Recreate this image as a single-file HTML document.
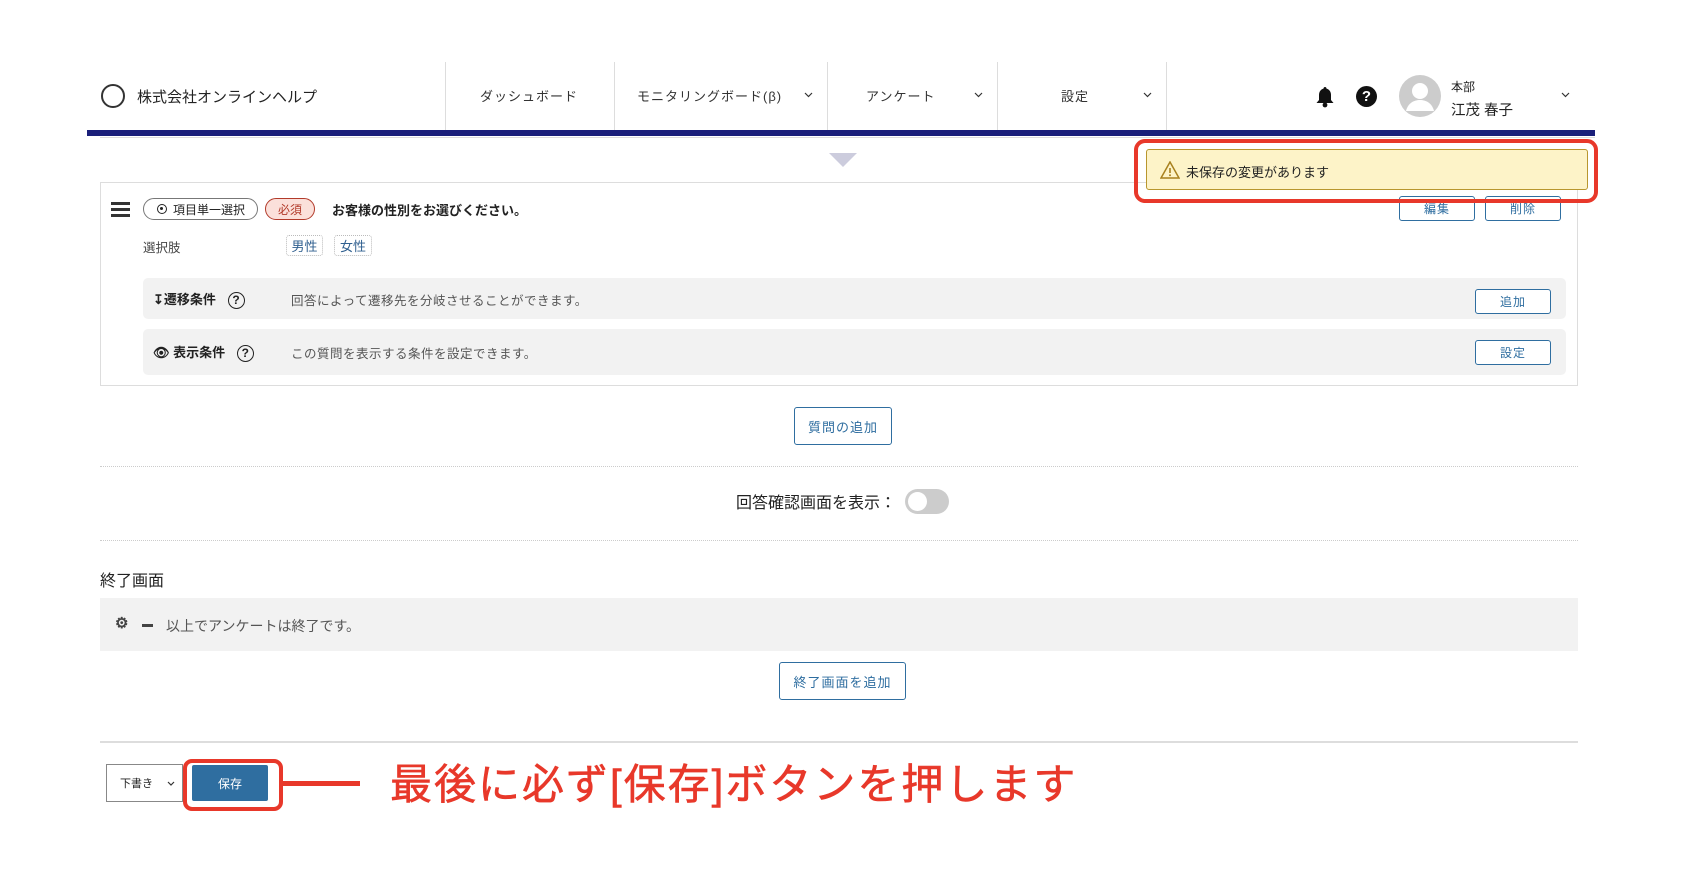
<!DOCTYPE html>
<html><head><meta charset="utf-8"><style>
*{margin:0;padding:0;box-sizing:border-box}
body{width:1682px;height:886px;background:#fff;position:relative;overflow:hidden;font-family:"Liberation Sans","Noto Sans CJK JP",sans-serif;color:#222}
.a{position:absolute}
.sep{position:absolute;top:62px;width:1px;height:68px;background:#ddd}
.nav{position:absolute;top:86px;font-size:13px;color:#333;letter-spacing:1px}
.chev{position:absolute;top:92px}
.btn{position:absolute;border:1px solid #2f6ea0;border-radius:3px;color:#2f6ea0;font-size:12px;display:flex;align-items:center;justify-content:center;background:#fff;letter-spacing:1px}
.row{position:absolute;left:143px;width:1423px;background:#f2f2f2;border-radius:5px}
.lbl{position:absolute;font-size:13px;font-weight:bold;color:#222}
.desc{position:absolute;font-size:12.5px;color:#555;letter-spacing:.5px}
.q{display:inline-flex;width:17px;height:17px;border:1.6px solid #222;border-radius:50%;font-size:12px;font-weight:bold;align-items:center;justify-content:center}
.chip{position:absolute;top:235px;height:21px;border:1px dotted #bbb;border-radius:3px;font-size:13px;color:#2f5f8f;display:flex;align-items:center;justify-content:center}
</style></head><body>
<!-- header -->
<div class="a" style="left:101px;top:84px;width:24px;height:24px;border:2px solid #333;border-radius:50%"></div>
<div class="a" style="left:137px;top:86px;font-size:15px;color:#222">株式会社オンラインヘルプ</div>
<div class="sep" style="left:445px"></div><div class="sep" style="left:614px"></div><div class="sep" style="left:827px"></div><div class="sep" style="left:997px"></div><div class="sep" style="left:1166px"></div>
<div class="nav" style="left:480px">ダッシュボード</div>
<div class="nav" style="left:637px">モニタリングボード(β)</div><svg class="chev" style="left:804px" width="9" height="6"><path d="M1 1l3.5 3.5L8 1" fill="none" stroke="#333" stroke-width="1.2"/></svg>
<div class="nav" style="left:866px">アンケート</div><svg class="chev" style="left:974px" width="9" height="6"><path d="M1 1l3.5 3.5L8 1" fill="none" stroke="#333" stroke-width="1.2"/></svg>
<div class="nav" style="left:1061px">設定</div><svg class="chev" style="left:1143px" width="9" height="6"><path d="M1 1l3.5 3.5L8 1" fill="none" stroke="#333" stroke-width="1.2"/></svg>
<svg class="a" style="left:1315px;top:86px" width="20" height="22" viewBox="0 0 20 22"><path d="M10 1c-1 0-1.5.8-1.5 1.6C5.5 3.4 4 6 4 9v5l-2.5 3h17L16 14V9c0-3-1.5-5.6-4.5-6.4C11.5 1.8 11 1 10 1z" fill="#111"/><circle cx="10" cy="19" r="2.4" fill="#111"/></svg>
<div class="a" style="left:1356px;top:86px;width:21px;height:21px;border-radius:50%;background:#111;color:#fff;font-weight:bold;font-size:15px;display:flex;align-items:center;justify-content:center">?</div>
<svg class="a" style="left:1399px;top:75px" width="42" height="42" viewBox="0 0 42 42"><circle cx="21" cy="21" r="21" fill="#ccc"/><circle cx="21" cy="16" r="8" fill="#fff"/><path d="M7 36c2-8 8-11 14-11s12 3 14 11z" fill="#fff"/></svg>
<div class="a" style="left:1451px;top:78px;font-size:12px">本部</div>
<div class="a" style="left:1451px;top:99px;font-size:14.5px">江茂 春子</div>
<svg class="chev" style="left:1561px" width="9" height="6"><path d="M1 1l3.5 3.5L8 1" fill="none" stroke="#333" stroke-width="1.2"/></svg>
<div class="a" style="left:87px;top:130px;width:1508px;height:6px;background:#1a1f7a"></div>
<div class="a" style="left:100px;top:137px;width:1495px;height:1px;background:#ddd"></div>
<svg class="a" style="left:829px;top:153px" width="28" height="15"><path d="M0 0h28L14 14z" fill="#ccd"/></svg>
<!-- card -->
<div class="a" style="left:100px;top:182px;width:1478px;height:204px;border:1px solid #ddd"></div>
<div class="a" style="left:111px;top:202px;width:19px;height:3px;background:#333;box-shadow:0 6px 0 #333,0 12px 0 #333"></div>
<div class="a" style="left:143px;top:198px;width:115px;height:22px;border:1px solid #777;border-radius:11px;font-size:12px;display:flex;align-items:center;padding-left:13px"><span style="display:inline-block;width:10px;height:10px;border:1.5px solid #222;border-radius:50%;margin-right:6px;position:relative"><span style="position:absolute;left:2px;top:2px;width:3px;height:3px;background:#222;border-radius:50%"></span></span>項目単一選択</div>
<div class="a" style="left:265px;top:198px;width:50px;height:22px;border:1px solid #b23a2a;background:#fbe0da;border-radius:11px;font-size:12px;color:#b23a2a;display:flex;align-items:center;justify-content:center">必須</div>
<div class="a" style="left:332px;top:200px;font-size:13px;font-weight:bold">お客様の性別をお選びください。</div>
<div class="btn" style="left:1399px;top:196px;width:76px;height:25px">編集</div>
<div class="btn" style="left:1485px;top:196px;width:76px;height:25px">削除</div>
<div class="a" style="left:143px;top:237px;font-size:12.5px;color:#444">選択肢</div>
<div class="chip" style="left:286px;width:37px">男性</div>
<div class="chip" style="left:334px;width:38px">女性</div>
<div class="row" style="top:278px;height:41px"></div>
<div class="lbl" style="left:153px;top:289px">↧遷移条件 <span class="q" style="margin-left:8px">?</span></div>
<div class="desc" style="left:291px;top:290px">回答によって遷移先を分岐させることができます。</div>
<div class="btn" style="left:1475px;top:289px;width:76px;height:25px">追加</div>
<div class="row" style="top:329px;height:46px"></div>
<div class="lbl" style="left:153px;top:342px">👁 表示条件 <span class="q" style="margin-left:8px">?</span></div>
<div class="desc" style="left:291px;top:343px">この質問を表示する条件を設定できます。</div>
<div class="btn" style="left:1475px;top:340px;width:76px;height:25px">設定</div>
<!-- alert -->
<div class="a" style="left:1134px;top:139px;width:464px;height:64px;border:4px solid #e8382a;border-radius:11px"></div>
<div class="a" style="left:1146px;top:149px;width:442px;height:41px;background:#fdf3c8;border:1px solid #b8962e;border-radius:3px"></div>
<svg class="a" style="left:1160px;top:161px" width="20" height="18" viewBox="0 0 20 18"><path d="M10 1L19 17H1z" fill="none" stroke="#a8801e" stroke-width="1.5"/><path d="M10 7v5" stroke="#a8801e" stroke-width="1.6"/><circle cx="10" cy="14.3" r="1" fill="#a8801e"/></svg>
<div class="a" style="left:1186px;top:162px;font-size:13px;color:#222">未保存の変更があります</div>
<!-- middle -->
<div class="btn" style="left:794px;top:407px;width:98px;height:38px;font-size:13px">質問の追加</div>
<div class="a" style="left:100px;top:466px;width:1478px;border-top:1px dotted #ccc"></div>
<div class="a" style="left:736px;top:489px;font-size:16px">回答確認画面を表示：</div>
<div class="a" style="left:905px;top:489px;width:44px;height:25px;border-radius:13px;background:#ccc"><div style="position:absolute;left:3px;top:3px;width:19px;height:19px;border-radius:50%;background:#fff"></div></div>
<div class="a" style="left:100px;top:540px;width:1478px;border-top:1px dotted #ccc"></div>
<div class="a" style="left:100px;top:567px;font-size:16px">終了画面</div>
<div class="a" style="left:100px;top:598px;width:1478px;height:53px;background:#f2f2f2"></div>
<div class="a" style="left:115px;top:614px;font-size:15px;color:#444;font-weight:bold">⚙</div>
<div class="a" style="left:142px;top:624px;width:11px;height:3px;background:#444"></div>
<div class="a" style="left:166px;top:616px;font-size:14px;color:#555">以上でアンケートは終了です。</div>
<div class="btn" style="left:779px;top:662px;width:127px;height:38px;font-size:13px">終了画面を追加</div>
<div class="a" style="left:100px;top:741px;width:1478px;height:2px;background:#ddd"></div>
<!-- bottom -->
<div class="a" style="left:106px;top:764px;width:77px;height:38px;border:1px solid #888;font-size:11px;display:flex;align-items:center;padding-left:13px">下書き<svg style="margin-left:14px" width="8" height="5"><path d="M1 1l3 3 3-3" fill="none" stroke="#333" stroke-width="1.2"/></svg></div>
<div class="a" style="left:192px;top:765px;width:76px;height:36px;background:#2f6ea0;border-radius:2px;color:#fff;font-size:12px;display:flex;align-items:center;justify-content:center">保存</div>
<div class="a" style="left:183px;top:759px;width:100px;height:52px;border:4px solid #e8382a;border-radius:9px"></div>
<div class="a" style="left:282px;top:781px;width:78px;height:5px;background:#e8382a"></div>
<div class="a" style="left:390px;top:761px;font-size:42px;color:#e8382a;letter-spacing:2px;white-space:nowrap;line-height:48px;-webkit-text-stroke:0.6px #e8382a">最後に必ず[保存]ボタンを押します</div>
</body></html>
